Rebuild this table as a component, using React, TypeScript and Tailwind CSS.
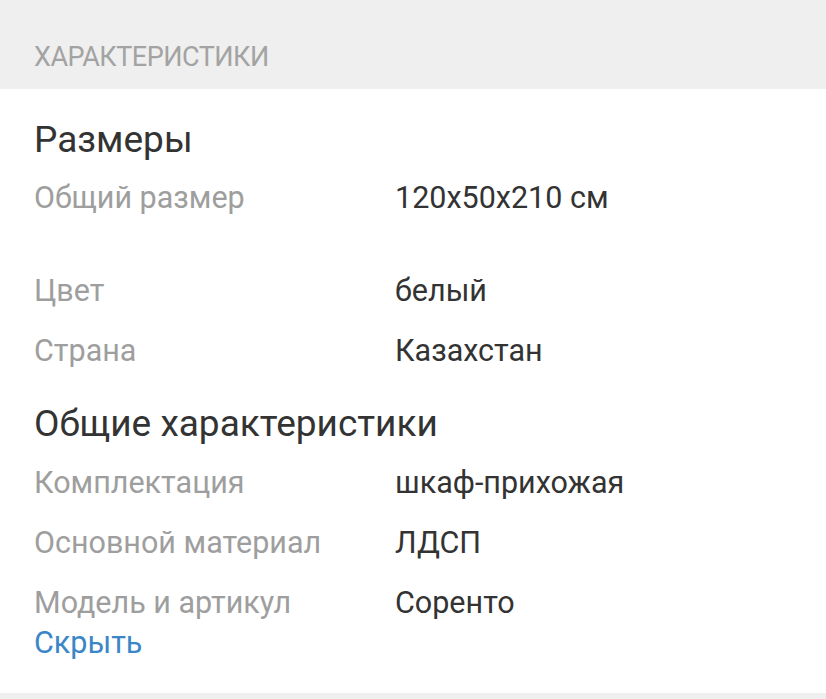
const rows1 = [{ label: "Общий размер", value: "120x50x210 см" }];
const rows2 = [
  { label: "Цвет", value: "белый" },
  { label: "Страна", value: "Казахстан" },
];
const rows3 = [
  { label: "Комплектация", value: "шкаф-прихожая" },
  { label: "Основной материал", value: "ЛДСП" },
  { label: "Модель и артикул", value: "Соренто" },
];

function Row({ label, value }: { label: string; value: string }) {
  return (
    <div className="flex h-[60px] items-center">
      <div className="w-[361px] shrink-0 text-[#9e9e9e]">{label}</div>
      <div className="text-[#333333]">{value}</div>
    </div>
  );
}

export default function App() {
  return (
    <div className="w-[826px] h-[699px] bg-white font-['Roboto',sans-serif] text-[30.5px] overflow-hidden flex flex-col">
      <div className="h-[89px] shrink-0 bg-[#efefef] flex items-end pb-[12px] px-[34px]">
        <span className="text-[27px] text-[#a3a3a3] tracking-[-0.5px]">ХАРАКТЕРИСТИКИ</span>
      </div>
      <div className="flex-1 px-[34px] pt-[23px]">
        <h2 className="text-[37px] text-[#333333] leading-[56px]">Размеры</h2>
        {rows1.map((r) => (
          <Row key={r.label} {...r} />
        ))}
        <div className="h-[33px]" />
        {rows2.map((r) => (
          <Row key={r.label} {...r} />
        ))}
        <h2 className="text-[37px] text-[#333333] pt-[14px] leading-[58px]">Общие характеристики</h2>
        {rows3.map((r) => (
          <Row key={r.label} {...r} />
        ))}
        <a className="block text-[#3a86c8] leading-[34px] -mt-[7px]">Скрыть</a>
      </div>
      <div className="h-[6px] shrink-0 bg-[#efefef]" />
    </div>
  );
}
